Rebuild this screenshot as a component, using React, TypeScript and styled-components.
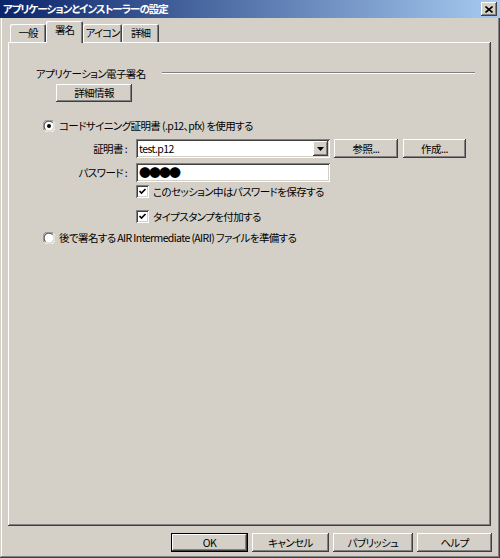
import React from "react";
import styled, { createGlobalStyle, css } from "styled-components";

const GlobalStyle = createGlobalStyle`
  html, body { margin: 0; padding: 0; background: #d4d0c8; }
  * { box-sizing: border-box; }
  body {
    font-family: "Noto Sans CJK JP", "Liberation Sans", sans-serif;
    font-size: 10.5px;
    letter-spacing: -0.6px;
    font-feature-settings: "palt";
    color: #000;
  }
`;

const raised = css`
  background: #d4d0c8;
  box-shadow: inset -1px -1px #404040, inset 1px 1px #ffffff,
    inset -2px -2px #808080, inset 2px 2px #d4d0c8;
`;

const sunken = css`
  background: #ffffff;
  box-shadow: inset 1px 1px #808080, inset -1px -1px #ffffff,
    inset 2px 2px #404040, inset -2px -2px #d4d0c8;
`;

const Window = styled.div`
  width: 500px;
  height: 558px;
  display: flex;
  flex-direction: column;
  background: #d4d0c8;
  box-shadow: inset -1px -1px #404040, inset 1px 1px #d4d0c8,
    inset -2px -2px #808080, inset 2px 2px #ffffff;
`;

const TitleBar = styled.div`
  height: 18px;
  display: flex;
  align-items: center;
  justify-content: space-between;
  padding: 0 3px 0 3px;
  background: linear-gradient(to right, #0a246a, #a6caf0);
`;

const TitleText = styled.span`
  color: #fff;
  font-weight: bold;
  font-size: 10.5px;
  letter-spacing: -1px;
  line-height: 14px;
`;

const CloseButton = styled.div`
  ${raised};
  width: 16px;
  height: 14px;
  display: flex;
  align-items: center;
  justify-content: center;
`;

const Body = styled.div`
  flex: 1;
  display: flex;
  flex-direction: column;
  padding: 3px 8px 0 8px;
`;

const TabStrip = styled.div`
  height: 21px;
  display: flex;
  align-items: flex-end;
  padding-left: 2px;
`;

const Tab = styled.div<{ $w: number; $active?: boolean }>`
  position: relative;
  width: ${(p) => p.$w}px;
  height: ${(p) => (p.$active ? 22 : 18)}px;
  margin-bottom: ${(p) => (p.$active ? -1 : 0)}px;
  z-index: ${(p) => (p.$active ? 2 : 1)};
  background: #d4d0c8;
  border-top-left-radius: 2px;
  border-top-right-radius: 2px;
  box-shadow: inset 1px 1px #ffffff, inset -1px 0 #404040, inset -2px 0 #808080;
  display: flex;
  justify-content: center;
  white-space: nowrap;
  letter-spacing: -1px;
  padding-top: 2px;
  line-height: 14px;
`;

const Panel = styled.div`
  width: 483px;
  height: 484px;
  display: flex;
  flex-direction: column;
  background: #d4d0c8;
  box-shadow: inset -1px -1px #404040, inset 1px 1px #ffffff,
    inset -2px -2px #808080;
  padding: 24px 16px 0 28px;
`;

const SectionHeader = styled.div`
  display: flex;
  align-items: center;
  height: 14px;
  gap: 16px;
`;

const SectionLine = styled.div`
  flex: 1;
  height: 2px;
  border-top: 1px solid #808080;
  border-bottom: 1px solid #ffffff;
`;

const Button = styled.div<{ $w: number; $h?: number; $default?: boolean }>`
  ${raised};
  width: ${(p) => p.$w}px;
  height: ${(p) => p.$h ?? 19}px;
  display: flex;
  align-items: center;
  justify-content: center;
  white-space: nowrap;
  line-height: 14px;
  ${(p) =>
    p.$default &&
    css`
      box-shadow: inset 1px 1px #000, inset -1px -1px #000,
        inset -2px -2px #404040, inset 2px 2px #ffffff,
        inset -3px -3px #808080;
    `}
`;

const DetailButton = styled(Button)`
  margin: 4px 0 0 20px;
`;

const OptionRow = styled.div<{ $top: number; $left: number }>`
  display: flex;
  align-items: center;
  gap: 4px;
  margin-top: ${(p) => p.$top}px;
  margin-left: ${(p) => p.$left}px;
  height: 13px;
  line-height: 13px;
  white-space: nowrap;
`;

const FieldRow = styled.div<{ $top: number }>`
  display: flex;
  align-items: center;
  margin-top: ${(p) => p.$top}px;
  height: 19px;
`;

const FieldLabel = styled.div`
  width: 93px;
  text-align: right;
  padding-right: 2px;
  margin-right: 7px;
  white-space: nowrap;
`;

const Combo = styled.div`
  ${sunken};
  width: 194px;
  height: 19px;
  display: flex;
  align-items: center;
  justify-content: space-between;
  padding: 2px 2px 2px 3px;
`;

const DropButton = styled.div`
  ${raised};
  width: 15px;
  height: 15px;
  display: flex;
  align-items: center;
  justify-content: center;
`;

const TextField = styled.div`
  ${sunken};
  width: 194px;
  height: 19px;
  display: flex;
  align-items: center;
  padding: 2px 3px;
`;

const Dots = styled.span`
  font-size: 12px;
  letter-spacing: -2px;
  line-height: 14px;
`;

const SideButtons = styled.div`
  display: flex;
  gap: 5px;
  margin-left: 4px;
`;

const ButtonRow = styled.div`
  display: flex;
  justify-content: flex-end;
  gap: 4px;
  margin-top: 7px;
  padding-right: 0px;
`;

const RadioBox = styled.span`
  width: 12px;
  height: 12px;
  display: inline-flex;
  flex-shrink: 0;
`;

const Radio = ({ on }: { on?: boolean }) => (
  <RadioBox>
    <svg width="12" height="12" viewBox="0 0 12 12">
      <path d="M1.5 10.5 A6 6 0 0 1 10.5 1.5" stroke="#808080" strokeWidth="1" fill="none" />
      <path d="M10.5 1.5 A6 6 0 0 1 1.5 10.5" stroke="#ffffff" strokeWidth="1" fill="none" />
      <circle cx="6" cy="6" r="4.5" fill="#fff" />
      <path d="M2.5 9.5 A4.5 4.5 0 0 1 9.5 2.5" stroke="#404040" strokeWidth="1" fill="none" />
      {on && <circle cx="6" cy="6" r="2" fill="#000" />}
    </svg>
  </RadioBox>
);

const CheckBox = styled.span`
  ${sunken};
  width: 13px;
  height: 13px;
  display: inline-flex;
  align-items: center;
  justify-content: center;
  flex-shrink: 0;
`;

const Check = () => (
  <CheckBox>
    <svg width="9" height="9" viewBox="0 0 9 9">
      <polyline points="1.5,4 3.5,6 7.5,2" stroke="#000" strokeWidth="1.6" fill="none" />
    </svg>
  </CheckBox>
);

export default function App() {
  return (
    <>
      <GlobalStyle />
      <Window>
        <TitleBar>
          <TitleText>アプリケーションとインストーラーの設定</TitleText>
          <CloseButton>
            <svg width="8" height="7" viewBox="0 0 8 7">
              <path d="M0.5 0.5 L7.5 6.5 M7.5 0.5 L0.5 6.5" stroke="#000" strokeWidth="1.6" />
            </svg>
          </CloseButton>
        </TitleBar>
        <Body>
          <TabStrip>
            <Tab $w={36}>一般</Tab>
            <Tab $w={37} $active>署名</Tab>
            <Tab $w={39}>アイコン</Tab>
            <Tab $w={37}>詳細</Tab>
          </TabStrip>
          <Panel>
            <SectionHeader>
              <span>アプリケーション電子署名</span>
              <SectionLine />
            </SectionHeader>
            <DetailButton $w={76} $h={18}>詳細情報</DetailButton>
            <OptionRow $top={17} $left={7}>
              <Radio on />
              <span>コードサイニング証明書 (.p12、pfx) を使用する</span>
            </OptionRow>
            <FieldRow $top={7}>
              <FieldLabel>証明書 :</FieldLabel>
              <Combo>
                <span>test.p12</span>
                <DropButton>
                  <svg width="7" height="4" viewBox="0 0 7 4">
                    <path d="M0 0 H7 L3.5 4 Z" fill="#000" />
                  </svg>
                </DropButton>
              </Combo>
              <SideButtons>
                <Button $w={64}>参照...</Button>
                <Button $w={63}>作成...</Button>
              </SideButtons>
            </FieldRow>
            <FieldRow $top={5}>
              <FieldLabel>パスワード :</FieldLabel>
              <TextField>
                <Dots>●●●●</Dots>
              </TextField>
            </FieldRow>
            <OptionRow $top={3} $left={100}>
              <Check />
              <span>このセッション中はパスワードを保存する</span>
            </OptionRow>
            <OptionRow $top={12} $left={100}>
              <Check />
              <span>タイプスタンプを付加する</span>
            </OptionRow>
            <OptionRow $top={8} $left={7}>
              <Radio />
              <span>後で署名する AIR Intermediate (AIRI) ファイルを準備する</span>
            </OptionRow>
          </Panel>
          <ButtonRow>
            <Button $w={77} $default>OK</Button>
            <Button $w={77}>キャンセル</Button>
            <Button $w={80}>パブリッシュ</Button>
            <Button $w={75}>ヘルプ</Button>
          </ButtonRow>
        </Body>
      </Window>
    </>
  );
}
